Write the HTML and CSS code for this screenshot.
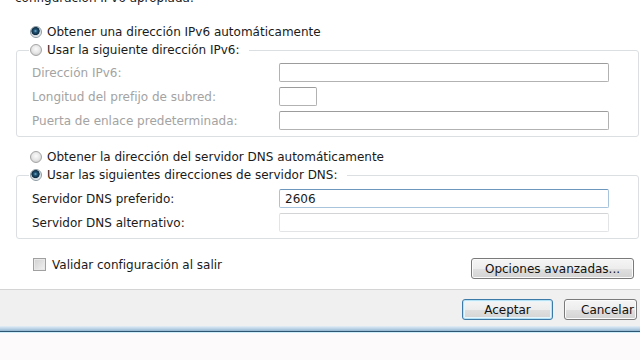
FILE: index.html
```html
<!DOCTYPE html>
<html lang="es">
<head>
    <meta charset="UTF-8">
    <title>Propiedades: Protocolo de Internet versión 6 (TCP/IPv6)</title>
    <link rel="stylesheet" href="styles.css">
</head>
<body>

<div class="panel">
    <p class="intro">configuración IPv6 apropiada.</p>

    <label class="option top"><input type="radio" name="ip" checked> Obtener una dirección IPv6 automáticamente</label>

    <fieldset class="group">
        <legend><label class="option"><input type="radio" name="ip"> Usar la siguiente dirección IPv6:</label></legend>
        <div class="fields off">
            <span>Dirección IPv6:</span>
            <input type="text" class="box wide" disabled>
            <span>Longitud del prefijo de subred:</span>
            <input type="text" class="box short" disabled>
            <span>Puerta de enlace predeterminada:</span>
            <input type="text" class="box wide" disabled>
        </div>
    </fieldset>

    <label class="option gap"><input type="radio" name="dns"> Obtener la dirección del servidor DNS automáticamente</label>

    <fieldset class="group dns">
        <legend><label class="option"><input type="radio" name="dns" checked> Usar las siguientes direcciones de servidor DNS:</label></legend>
        <div class="fields">
            <span>Servidor DNS preferido:</span>
            <input type="text" class="box wide focus" value="2606">
            <span>Servidor DNS alternativo:</span>
            <input type="text" class="box wide faint">
        </div>
    </fieldset>

    <div class="bottom-row">
        <label class="check"><input type="checkbox"> Validar configuración al salir</label>
        <button class="btn adv">Opciones avanzadas...</button>
    </div>
</div>

<div class="footer">
    <button class="btn ok">Aceptar</button>
    <button class="btn cancel">Cancelar</button>
</div>
<div class="edge"></div>
<div class="below"></div>

</body>
</html>
```

FILE: styles.css
```css
* { margin: 0; padding: 0; box-sizing: border-box; }
html, body { height: 100%; overflow: hidden; }
body {
    font-family: "DejaVu Sans", Verdana, sans-serif;
    font-size: 12px;
    color: #1a1a1a;
    background: #fcfafa;
}
.panel {
    background: #fff;
    height: 289px;
    overflow: hidden;
}
.intro {
    margin: -9px 0 0 15px;
    line-height: 14px;
}

/* radio rows */
.option {
    display: flex;
    align-items: center;
    height: 18px;
    white-space: nowrap;
}
.option.top { height: 19px; margin-top: 17px; padding-left: 30px; }
.option.gap { height: 19px; margin-top: 10px; padding-left: 30px; }
.option input {
    appearance: none;
    width: 12px;
    height: 12px;
    margin-right: 5px;
    border-radius: 50%;
    border: 1px solid #a4a4a4;
    background: radial-gradient(circle at 50% 40%, #fbfbfb 0, #e6e6e6 4px, #d2d2d2 6px);
}
.option input:checked {
    border-color: #8c9aa3;
    background: radial-gradient(circle at 45% 40%, #79b3d0 0, #245879 1.5px, #0c2a40 3.8px, #c9d3d9 4.4px, #f4f4f4 6px);
}

/* group boxes */
.group {
    margin: 0 1px 0 16px;
    padding: 4px 0 6px 15px;
    border: 1px solid #dcdfe2;
    border-radius: 3px;
    min-width: 0;
}
.group.dns { padding-top: 5px; }
.group legend {
    margin-left: -3px;
    padding: 0 9px 0 1px;
}
.fields {
    display: grid;
    grid-template-columns: 247px 1fr;
    row-gap: 5px;
    align-items: center;
}
.fields.off span { color: #a3a3a3; }
.box {
    font: inherit;
    height: 19px;
    padding: 0 5px;
    border: 1px solid #b2b2b2;
    border-top-color: #9c9c9c;
    border-radius: 2px;
    background: #fff;
    color: #1a1a1a;
}
.box.wide { width: 330px; }
.box.short { width: 38px; }
.box.focus { border-color: #a8c4dc; border-top-color: #6d97bd; }
.box.faint { border-color: #e2e4e6; border-top-color: #d2d4d6; }

/* checkbox + advanced button */
.bottom-row {
    display: flex;
    justify-content: space-between;
    align-items: flex-start;
    margin: 18px 6px 0 33px;
}
.check {
    display: flex;
    align-items: center;
    gap: 6px;
    height: 15px;
}
.check input {
    appearance: none;
    width: 13px;
    height: 13px;
    border: 1px solid #a0a0a0;
    background: linear-gradient(135deg, #d0d0d0, #f2f2f2);
    box-shadow: inset 0 0 0 1px #e8e8e8;
}

/* buttons */
.btn {
    font: inherit;
    color: #111;
    height: 21px;
    border: 1px solid #7a7a7a;
    border-radius: 3px;
    background: linear-gradient(#f5f5f5 0%, #ededed 50%, #e0e0e0 51%, #d3d3d3 100%);
    box-shadow: inset 0 0 0 1px #fbfbfb;
}
.btn.adv { width: 163px; margin-top: 1px; }
.btn.ok {
    width: 91px;
    border-color: #3d7aa8;
    box-shadow: inset 0 0 0 1px #b6e2f5, inset 0 0 0 2px #e8f6fc;
}
.btn.cancel { width: 73px; padding-left: 14px; }

.footer {
    display: flex;
    justify-content: flex-end;
    gap: 11px;
    height: 37px;
    padding: 9px 3px 0 0;
    background: #f0f0f0;
    border-top: 1px solid #d4d4d4;
}
.edge {
    height: 7px;
    background: linear-gradient(#e4eef6 0, #b9d2e6 40%, #94b6d0 70%, #2c5672 72%, #2c5672 86%, #cdeefa 87%);
}
.below { height: 40px; background: #fcfafa; }
```
